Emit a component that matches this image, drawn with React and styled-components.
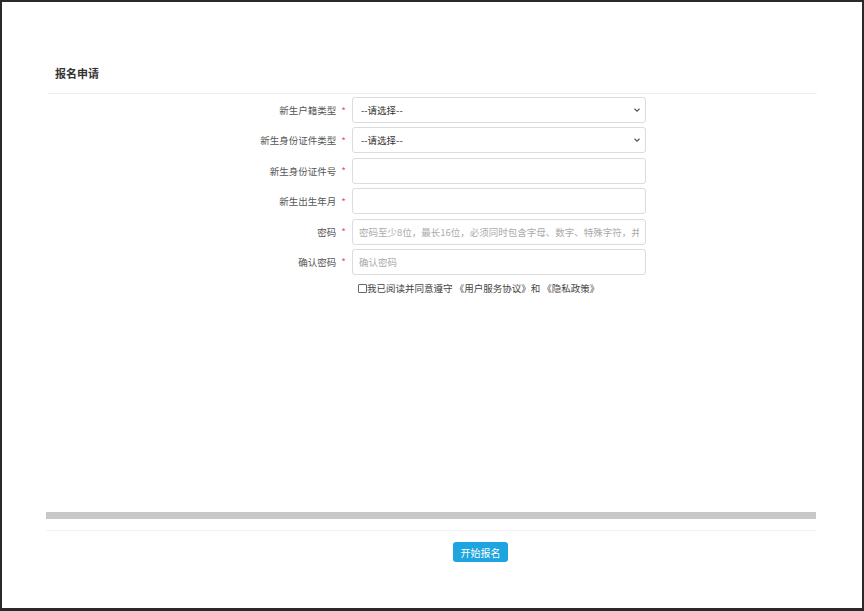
import React from "react";
import styled, { createGlobalStyle } from "styled-components";

const Global = createGlobalStyle`
  html, body { margin: 0; padding: 0; background: #fff; }
  * { box-sizing: border-box; }
  body { font-family: "Noto Sans CJK SC", "Noto Sans", sans-serif; }
`;

const Frame = styled.div`
  width: 864px;
  height: 611px;
  border: 2px solid #2a2a2a;
  border-bottom-width: 3px;
  background: #fff;
  display: flex;
  flex-direction: column;
  padding: 0 45px 0 44px;
`;

const Header = styled.div`
  padding: 62px 0 0 7px;
  height: 92px;
  border-bottom: 1px solid #f0f0f0;
  margin: 0 0 0 2px;
`;

const Title = styled.h1`
  margin: 0;
  font-size: 11px;
  line-height: 18px;
  font-weight: 700;
  color: #333;
`;

const Form = styled.div`
  display: grid;
  grid-template-columns: 300px 294px;
  column-gap: 6px;
  row-gap: 4.4px;
  padding-top: 3px;
`;

const Label = styled.label`
  display: flex;
  align-items: center;
  justify-content: flex-end;
  font-size: 9.5px;
  color: #555;
  height: 26px;
  padding-right: 0;
`;

const Star = styled.span`
  color: #e8595a;
  margin-left: 5px;
  font-size: 10px;
`;

const fieldBase = `
  height: 26px;
  width: 294px;
  border: 1px solid #dcdcdc;
  border-radius: 3px;
  background: #fff;
  font-family: "Noto Sans CJK SC", "Noto Sans", sans-serif;
  font-size: 9.5px;
  color: #333;
  padding: 0 6px;
  outline: none;
`;

const Select = styled.div`
  ${fieldBase}
  display: flex;
  align-items: center;
  justify-content: space-between;
  padding-left: 8px;
  padding-right: 4px;
`;

const Input = styled.input`
  ${fieldBase}
  &::placeholder { color: #ababab; }
`;

const Check = styled.label`
  grid-column: 2;
  display: flex;
  align-items: center;
  font-size: 9.5px;
  color: #444;
  padding-left: 6px;
  margin-top: 2px;
  height: 14px;
  white-space: nowrap;
`;

const Box = styled.span`
  width: 9px;
  height: 9px;
  border: 1px solid #666;
  border-radius: 1px;
  display: inline-block;
`;

const Spacer = styled.div`
  flex: 1;
`;

const Bar = styled.div`
  height: 7px;
  background: #c8c8c8;
  margin-right: 1px;
`;

const Line = styled.div`
  height: 1px;
  background: #f2f2f2;
  margin-top: 11px;
`;

const Footer = styled.div`
  display: flex;
  justify-content: center;
  padding: 11px 0 46px 98px;
`;

const Button = styled.button`
  width: 55px;
  height: 20px;
  border: none;
  border-radius: 3px;
  background: #1ea5df;
  color: #fff;
  font-family: "Noto Sans CJK SC", "Noto Sans", sans-serif;
  font-size: 10px;
  padding: 0;
`;

const Chevron = () => (
  <svg width="8" height="8" viewBox="0 0 8 8">
    <path d="M1.5 2.8 L4 5.2 L6.5 2.8" fill="none" stroke="#555" strokeWidth="1.2" />
  </svg>
);

const rows = [
  { label: "新生户籍类型", type: "select" },
  { label: "新生身份证件类型", type: "select" },
  { label: "新生身份证件号", type: "input", ph: "" },
  { label: "新生出生年月", type: "input", ph: "" },
  { label: "密码", type: "input", ph: "密码至少8位，最长16位，必须同时包含字母、数字、特殊字符，并且" },
  { label: "确认密码", type: "input", ph: "确认密码" },
];

export default function App() {
  return (
    <>
      <Global />
      <Frame>
        <Header>
          <Title>报名申请</Title>
        </Header>
        <Form>
          {rows.map((r) => (
            <React.Fragment key={r.label}>
              <Label>
                {r.label}
                <Star>*</Star>
              </Label>
              {r.type === "select" ? (
                <Select>
                  <span>--请选择--</span>
                  <Chevron />
                </Select>
              ) : (
                <Input placeholder={r.ph} />
              )}
            </React.Fragment>
          ))}
          <Check>
            <Box />
            我已阅读并同意遵守 《用户服务协议》和 《隐私政策》
          </Check>
        </Form>
        <Spacer />
        <Bar />
        <Line />
        <Footer>
          <Button>开始报名</Button>
        </Footer>
      </Frame>
    </>
  );
}
